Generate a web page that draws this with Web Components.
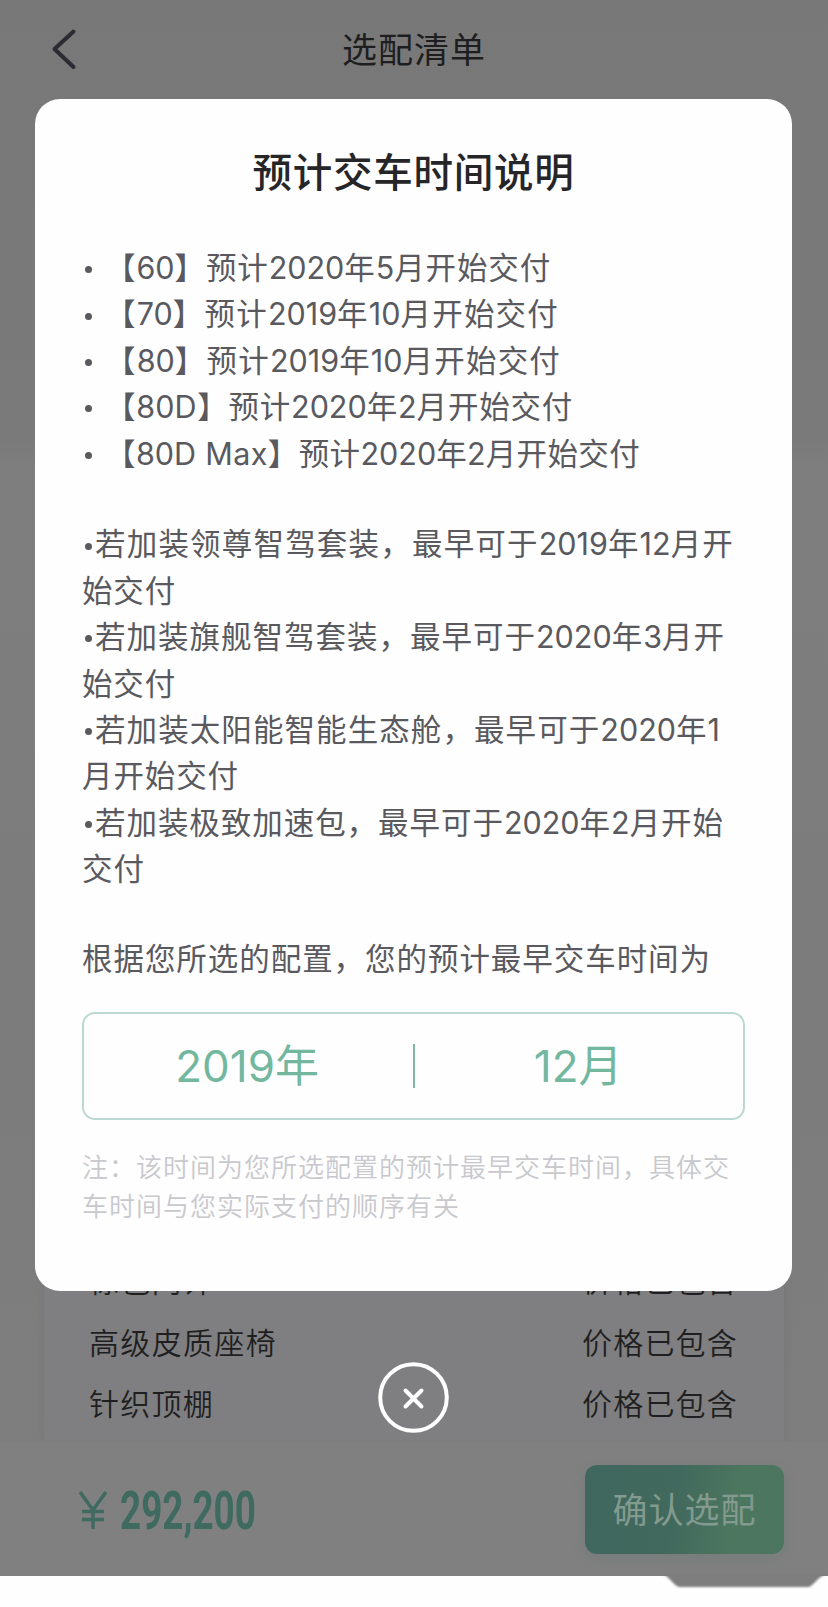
<!DOCTYPE html>
<html lang="zh-CN">
<head>
<meta charset="utf-8">
<title>选配清单</title>
<style>
  body {
    margin: 0;
    background: #fefefe;
    font-family: Inter, "Noto Sans CJK SC", sans-serif;
  }
</style>
</head>
<body>
<order-page>
  <nav-bar slot="header"><text-line width="144">选配清单</text-line></nav-bar>
  <option-row slot="options" name="棕色内饰" length="125"></option-row>
  <option-row slot="options" name="高级皮质座椅" length="188"></option-row>
  <option-row slot="options" name="针织顶棚" length="125"></option-row>
  <price-bar slot="footer" price="292,200"></price-bar>
  <delivery-dialog slot="dialog">
    <text-line slot="title" width="322">预计交车时间说明</text-line>
    <model-item slot="models"><text-line width="446">【60】预计2020年5月开始交付</text-line></model-item>
    <model-item slot="models"><text-line width="454">【70】预计2019年10月开始交付</text-line></model-item>
    <model-item slot="models"><text-line width="456">【80】预计2019年10月开始交付</text-line></model-item>
    <model-item slot="models"><text-line width="468">【80D】预计2020年2月开始交付</text-line></model-item>
    <model-item slot="models"><text-line width="535">【80D Max】预计2020年2月开始交付</text-line></model-item>
    <text-line slot="extras" dot width="639">若加装领尊智驾套装，最早可于2019年12月开</text-line>
    <text-line slot="extras" width="94">始交付</text-line>
    <text-line slot="extras" dot width="630">若加装旗舰智驾套装，最早可于2020年3月开</text-line>
    <text-line slot="extras" width="94">始交付</text-line>
    <text-line slot="extras" dot width="625">若加装太阳能智能生态舱，最早可于2020年1</text-line>
    <text-line slot="extras" width="157">月开始交付</text-line>
    <text-line slot="extras" dot width="629">若加装极致加速包，最早可于2020年2月开始</text-line>
    <text-line slot="extras" width="63">交付</text-line>
    <text-line slot="summary" width="629">根据您所选的配置，您的预计最早交车时间为</text-line>
    <date-box slot="date" year="2019年" month="12月"></date-box>
    <text-line slot="note" width="648">注：该时间为您所选配置的预计最早交车时间，具体交</text-line>
    <text-line slot="note" width="378">车时间与您实际支付的顺序有关</text-line>
  </delivery-dialog>
</order-page>

<script>
  class BaseElement extends HTMLElement {
    constructor() {
      super();
      this.attachShadow({ mode: "open" });
    }

    connectedCallback() {
      this.render();
    }
  }

  class OrderPage extends BaseElement {
    render() {
      this.shadowRoot.innerHTML = `
        <style>
          :host {
            display: block;
            position: relative;
            width: 828px;
            height: 1607px;
            overflow: hidden;
          }
          .screen {
            display: flex;
            flex-direction: column;
            height: 1576px;
            background: linear-gradient(#787878 0, #7a7a7b 440px, #7e7e7f 470px, #7c7c7c 1000px, #7e7e7f 1441px);
          }
          .list {
            flex: 1;
            display: flex;
            flex-direction: column;
            justify-content: flex-end;
            box-sizing: border-box;
            margin: 0 44px;
            padding: 0 46px 6px 45px;
            background: #7f7f81;
            box-shadow: 0 0 9px #787879;
            clip-path: inset(900px -12px 0 -12px);
          }
          .tab {
            position: absolute;
            left: 660px;
            top: 1573px;
          }
        </style>
        <div class="screen">
          <slot name="header"></slot>
          <div class="list"><slot name="options"></slot></div>
          <slot name="footer"></slot>
        </div>
        <svg class="tab" width="168" height="20" viewBox="0 0 168 20">
          <defs><filter id="soft"><feGaussianBlur stdDeviation="1"/></filter></defs>
          <path d="M2 1C9 3 13 12 19 14H149C155 11 157 5 166 1Z" fill="#7e7e7f" filter="url(#soft)"/>
        </svg>
        <slot name="dialog"></slot>
      `;
    }
  }

  class NavBar extends BaseElement {
    render() {
      this.shadowRoot.innerHTML = `
        <style>
          :host {
            display: grid;
            grid-template-columns: 96px 1fr 96px;
            align-items: center;
            height: 99px;
            font-size: 35px;
            line-height: 50px;
            color: #1e1e20;
          }
          svg { margin: 0 0 2px 49px; }
          .title { justify-self: center; }
        </style>
        <svg width="30" height="44" viewBox="0 0 30 44">
          <path d="M24.500 4.500L5.500 22L24.500 40" fill="none" stroke="#2b2b33" stroke-width="4" stroke-linecap="round" stroke-linejoin="round"/>
        </svg>
        <div class="title"><slot></slot></div>
      `;
    }
  }

  class OptionRow extends BaseElement {
    render() {
      this.shadowRoot.innerHTML = `
        <style>
          :host {
            display: flex;
            justify-content: space-between;
            height: 61.4px;
            line-height: 61.4px;
            font-size: 30px;
            font-weight: 350;
            color: #1f1f21;
          }
        </style>
        <text-line width="${this.getAttribute("length")}">${this.getAttribute("name")}</text-line>
        <text-line width="156">价格已包含</text-line>
      `;
    }
  }

  class PriceBar extends BaseElement {
    render() {
      this.shadowRoot.innerHTML = `
        <style>
          :host {
            display: flex;
            justify-content: space-between;
            align-items: flex-start;
            box-sizing: border-box;
            height: 134.5px;
            padding: 23.5px 44px 0 78px;
            background: #808081;
            color: #3f6a5f;
          }
          .price {
            display: flex;
            gap: 12px;
            height: 89px;
            line-height: 89px;
          }
          .sign {
            width: 30px;
            align-self: center;
          }
          .amount {
            padding-top: 2px;
            font: 700 53px/89px Roboto, sans-serif;
            transform: scaleX(0.695);
            transform-origin: 0 50%;
          }
          .confirm {
            display: flex;
            align-items: center;
            justify-content: center;
            width: 199px;
            height: 89px;
            border-radius: 12px;
            background: linear-gradient(100deg, #3f675d, #42695d 45%, #4c775f 75%, #4c755f);
            box-shadow: 0 4px 12px rgba(80, 110, 95, 0.2);
            font-size: 35px;
            line-height: 50px;
            color: #839a8e;
          }
        </style>
        <div class="price">
          <svg class="sign" width="30" height="40" viewBox="0 0 30 40" role="img" aria-label="¥">
            <path d="M2 2L15 20L28 2M15 20V39M4 21.500H26M4 29.500H26" fill="none" stroke="currentColor" stroke-width="3.500"/>
          </svg>
          <span class="amount">${this.getAttribute("price")}</span>
        </div>
        <div class="confirm"><text-line width="144">确认选配</text-line></div>
      `;
    }
  }

  class DeliveryDialog extends BaseElement {
    render() {
      this.shadowRoot.innerHTML = `
        <style>
          /* Lies over the whole order page */
          :host {
            position: absolute;
            inset: 0;
            display: flex;
            flex-direction: column;
            align-items: center;
            padding-right: 1px;
          }
          .card {
            box-sizing: border-box;
            width: 757px;
            height: 1192px;
            margin-top: 99px;
            padding: 46px 47px 0;
            border-radius: 25px;
            background: #fefefe;
            font-size: 30.5px;
            line-height: 46.4px;
            color: #59595e;
          }
          .title {
            display: flex;
            justify-content: center;
            font-size: 39.5px;
            font-weight: 500;
            line-height: 56px;
            color: #262629;
          }
          .models { margin-top: 44px; }
          .extras { margin-top: 44.5px; }
          .summary { margin-top: 43.5px; }
          .date { margin-top: 29px; }
          .note {
            margin-top: 28px;
            font-size: 26px;
            font-weight: 350;
            line-height: 39.6px;
            color: #c8c8cd;
          }
          button {
            width: 71px;
            height: 71px;
            margin-top: 70.5px;
            padding: 0;
            border: 0;
            background: none;
          }
          button svg { display: block; }
        </style>
        <div class="card">
          <div class="title"><slot name="title"></slot></div>
          <div class="models"><slot name="models"></slot></div>
          <div class="extras"><slot name="extras"></slot></div>
          <div class="summary"><slot name="summary"></slot></div>
          <div class="date"><slot name="date"></slot></div>
          <div class="note"><slot name="note"></slot></div>
        </div>
        <button aria-label="关闭">
          <svg width="71" height="71" viewBox="0 0 71 71" fill="none" stroke="#fff" stroke-width="4" stroke-linecap="round">
            <circle cx="35.500" cy="35.500" r="33.300"/>
            <path d="M27.500 28.500L43.500 44.500M43.500 28.500L27.500 44.500"/>
          </svg>
        </button>
      `;
    }
  }

  class ModelItem extends BaseElement {
    render() {
      this.shadowRoot.innerHTML = `
        <style>
          :host {
            display: flex;
            align-items: center;
            height: 46.4px;
          }
          .dot {
            width: 7px;
            height: 7px;
            margin: 3px 13px 0 3px;
            border-radius: 50%;
            background: currentColor;
          }
        </style>
        <span class="dot"></span><slot></slot>
      `;
    }
  }

  class DateBox extends BaseElement {
    render() {
      this.shadowRoot.innerHTML = `
        <style>
          :host {
            display: grid;
            grid-template-columns: 1fr 2px 1fr;
            align-items: center;
            justify-items: center;
            box-sizing: border-box;
            height: 108px;
            border: 2px solid #bcd8d2;
            border-radius: 13px;
            font-size: 44px;
            line-height: 60px;
            color: #73b79e;
          }
          .divider {
            width: 2px;
            height: 44px;
            background: #7fb5a6;
          }
        </style>
        <text-line width="146">${this.getAttribute("year")}</text-line>
        <span class="divider"></span>
        <text-line width="90">${this.getAttribute("month")}</text-line>
      `;
    }
  }

  // One line of text, tracked so that it fills the given width.
  // Digits keep their own spacing, only the other characters are tracked.
  class TextLine extends BaseElement {
    render() {
      this.shadowRoot.innerHTML = `
        <style>
          :host {
            display: flex;
            align-items: center;
            white-space: nowrap;
          }
          ::slotted(span) { letter-spacing: 0; }
          .dot {
            width: 7px;
            height: 7px;
            margin: 3px 3px 0;
            border-radius: 50%;
            background: currentColor;
          }
        </style>
        ${this.hasAttribute("dot") ? '<span class="dot"></span>' : ""}<span class="text"><slot></slot></span>
      `;
      this.innerHTML = this.textContent.replace(/\d+/g, "<span>$&</span>");
      const text = this.shadowRoot.querySelector(".text");
      const rest = Number(this.getAttribute("width")) - text.getBoundingClientRect().width;
      const tracked = this.textContent.replace(/\d/g, "").length;
      text.style.letterSpacing = `${rest / tracked}px`;
    }
  }

  customElements.define("order-page", OrderPage);
  customElements.define("nav-bar", NavBar);
  customElements.define("option-row", OptionRow);
  customElements.define("price-bar", PriceBar);
  customElements.define("delivery-dialog", DeliveryDialog);
  customElements.define("model-item", ModelItem);
  customElements.define("date-box", DateBox);
  customElements.define("text-line", TextLine);
</script>
</body>
</html>
